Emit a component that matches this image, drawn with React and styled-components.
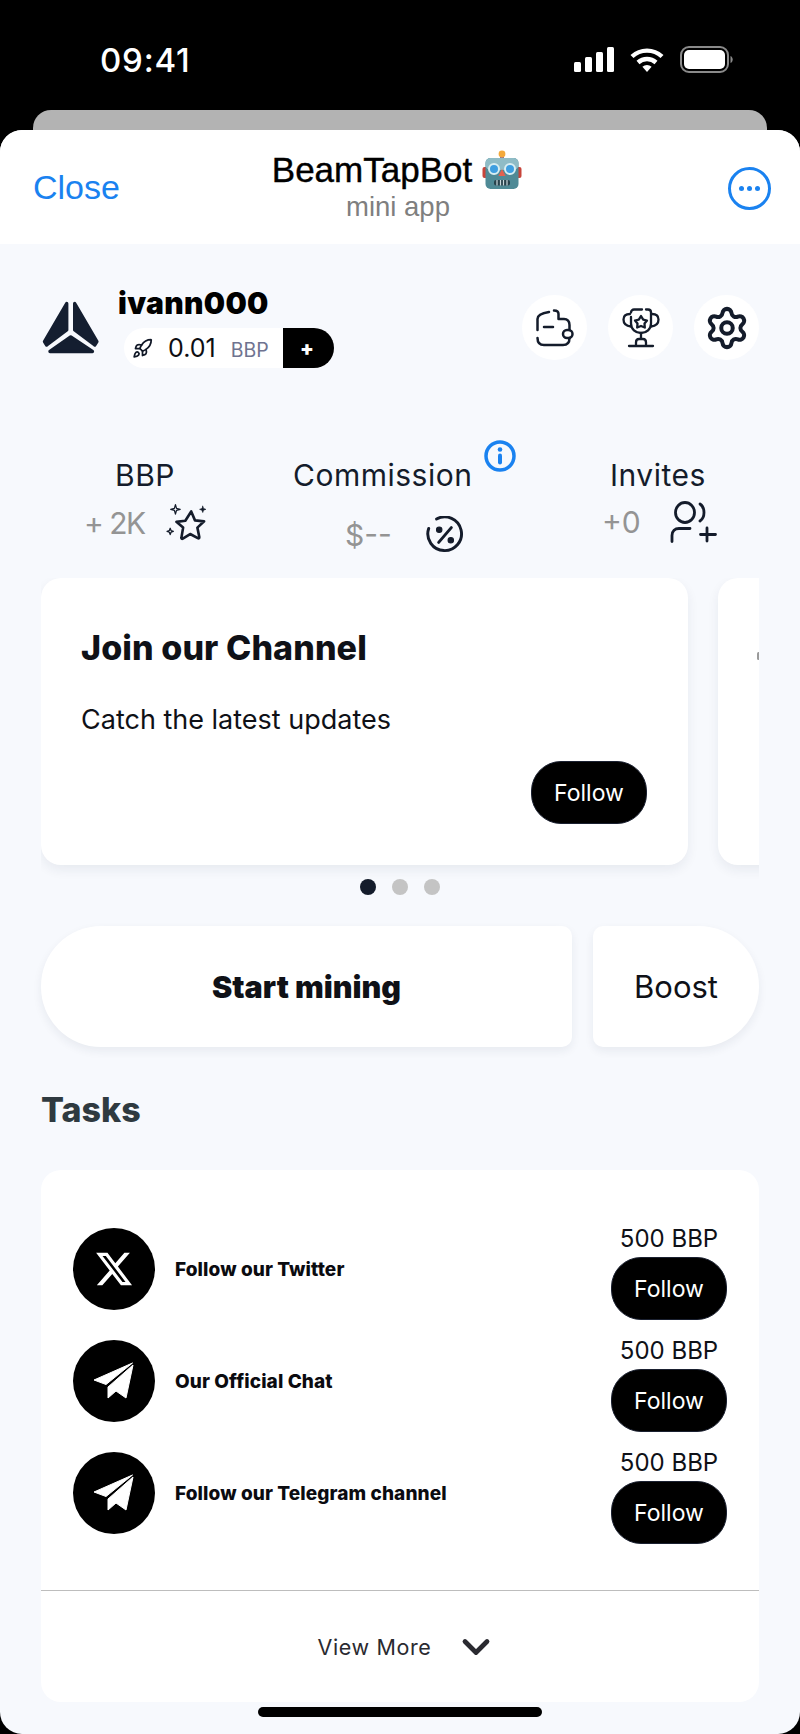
import React from 'react';
import styled, { createGlobalStyle } from 'styled-components';
import { FaXTwitter } from 'react-icons/fa6';
import { ChevronDown, Rocket, Settings } from 'lucide-react';

const GlobalStyle = createGlobalStyle`
  html, body { margin: 0; padding: 0; background: #000; }
  * { box-sizing: border-box; }
  body { font-family: Inter, "Noto Sans", sans-serif; }
  svg { flex: none; }
`;

const Phone = styled.div`
  width: 800px;
  height: 1734px;
  background: #000;
  overflow: hidden;
`;
const StatusBar = styled.div`
  height: 110px;
  padding: 43px 67px 0 100px;
  display: flex;
  justify-content: space-between;
  align-items: flex-start;
`;
const Time = styled.div`
  color: #fff;
  font-family: Inter, sans-serif;
  font-size: 33px;
  font-weight: 500;
  line-height: 34px;
  letter-spacing: 0.8px;
`;
const StatusIcons = styled.div`
  display: flex;
  align-items: center;
  gap: 16px;
  padding-top: 3px;
`;
const PeekSheet = styled.div`
  height: 40px;
  margin: 0 33px -20px;
  background: #b3b3b3;
  border-radius: 18px 18px 0 0;
`;
const Sheet = styled.div`
  position: relative;
  height: 1604px;
  background: #f7f9fd;
  border-radius: 22px;
  overflow: hidden;
`;
const TopBar = styled.div`
  height: 114px;
  background: #fff;
  display: grid;
  grid-template-columns: 1fr auto 1fr;
  align-items: center;
  padding: 0 37px 0 33px;
`;
const Close = styled.div`
  color: #1a82f0;
  font-family: "Liberation Sans", sans-serif;
  font-size: 34px;
`;
const TitleBlock = styled.div`
  text-align: center;
  margin-top: -4px;
`;
const Title = styled.div`
  display: flex;
  align-items: center;
  gap: 10px;
  color: #000;
  font-family: "Liberation Sans", sans-serif;
  font-size: 35px;
  line-height: 40px;
  margin-top: -1px;
  margin-left: -2px;
  -webkit-text-stroke: 0.4px #000;
`;
const Subtitle = styled.div`
  color: #7f7f7f;
  font-family: "Liberation Sans", sans-serif;
  font-size: 27.5px;
  line-height: 26px;
  margin-top: 4px;
`;
const MoreButton = styled.div`
  justify-self: end;
  width: 43px;
  height: 43px;
  margin: 3px -8px 0 0;
  border: 3px solid #1a82f0;
  border-radius: 50%;
  display: flex;
  align-items: center;
  justify-content: center;
  gap: 3px;
`;
const MoreDot = styled.span`
  width: 5px;
  height: 5px;
  border-radius: 50%;
  background: #1a82f0;
`;
const Content = styled.div`
  padding: 46px 41px 0;
`;
const Profile = styled.div`
  height: 78px;
  display: flex;
  align-items: flex-start;
`;
const Logo = styled.svg`
  width: 60px;
  height: 55px;
  margin-top: 10px;
`;
const Identity = styled.div`
  margin-left: 17px;
`;
const UserName = styled.div`
  color: #000;
  font-size: 30px;
  font-weight: 900;
  line-height: 28px;
  letter-spacing: 0.3px;
  margin-top: -1px;
`;
const Balance = styled.div`
  display: flex;
  height: 40px;
  margin: 11px 0 0 6px;
`;
const BalancePill = styled.div`
  width: 159px;
  background: #fff;
  border-radius: 20px 0 0 20px;
  display: flex;
  align-items: center;
  padding-left: 8px;
  color: #111827;
`;
const BalanceValue = styled.span`
  margin-left: 15px;
  color: #0e0e12;
  font-size: 25px;
  line-height: 30px;
`;
const BalanceUnit = styled.span`
  margin-left: 15px;
  margin-top: 4px;
  color: #6f7390;
  font-size: 19.5px;
  line-height: 26px;
`;
const PlusButton = styled.div`
  width: 51px;
  background: #000;
  border-radius: 0 20px 20px 0;
  color: #fff;
  display: flex;
  align-items: center;
  justify-content: center;
  padding-right: 3px;
  font-size: 20px;
  font-weight: 900;
`;
const ProfileActions = styled.div`
  margin-left: auto;
  margin-top: 5px;
  display: flex;
  gap: 21px;
`;
const RoundAction = styled.div`
  width: 65px;
  height: 65px;
  background: #fff;
  border-radius: 50%;
  display: flex;
  align-items: center;
  justify-content: center;
  color: #141c2b;
`;
const Stats = styled.div`
  height: 121px;
  margin-top: 89px;
  padding-left: 43px;
  display: flex;
  align-items: flex-start;
`;
const Stat = styled.div`
  position: relative;
  flex: none;
  width: ${(p) => p.$width}px;
  margin-right: ${(p) => p.$gap || 0}px;
`;
const StatLabel = styled.div`
  color: #141c2b;
  font-size: 30px;
  line-height: 36px;
  letter-spacing: 0.5px;
  white-space: nowrap;
  padding-left: ${(p) => p.$inset || 0}px;
`;
const StatValue = styled.div`
  display: flex;
  height: 40px;
  margin-top: ${(p) => p.$top}px;
  align-items: center;
  gap: ${(p) => p.$gap}px;
  padding-left: ${(p) => p.$inset || 0}px;
`;
const StatNumber = styled.span`
  color: #949494;
  font-size: 30px;
  line-height: 40px;
  letter-spacing: ${(p) => p.$tight || 0}px;
  white-space: nowrap;
`;
const InfoBadge = styled.svg`
  position: absolute;
  right: 0;
  top: -17px;
  width: 32px;
  height: 32px;
`;
const Carousel = styled.div`
  display: flex;
  gap: 30px;
  overflow: hidden;
  padding-bottom: 14px;
`;
const PromoCard = styled.div`
  flex: none;
  width: 647px;
  height: 287px;
  padding: 50px 41px 0 40px;
  background: #fff;
  border-radius: 20px;
  box-shadow: 0 5px 12px rgba(30, 40, 70, 0.07);
`;
const PromoTitle = styled.div`
  color: #0f1117;
  font-size: 34px;
  font-weight: 800;
  line-height: 40px;
  letter-spacing: 0.1px;
`;
const PromoText = styled.div`
  margin-top: 35px;
  color: #0f1117;
  font-size: 27px;
  line-height: 34px;
`;
const PromoFooter = styled.div`
  display: flex;
  justify-content: flex-end;
  margin-top: 24px;
`;
const FollowButton = styled.div`
  width: 116px;
  height: 63px;
  background: #000;
  border: 1px solid #1a2030;
  border-radius: 30px;
  color: #fff;
  font-size: 23px;
  display: flex;
  align-items: center;
  justify-content: center;
`;
const NextCard = styled.div`
  flex: none;
  width: 647px;
  height: 287px;
  padding: 74px 0 0 39px;
  background: #fff;
  border-radius: 20px;
  box-shadow: 0 5px 12px rgba(30, 40, 70, 0.07);
`;
const CutMark = styled.div`
  width: 3px;
  height: 8px;
  border-radius: 2px;
  background: #9a9a9a;
`;
const Dots = styled.div`
  display: flex;
  justify-content: flex-start;
  gap: 16px;
  padding-left: 319px;
`;
const Dot = styled.span`
  width: 16px;
  height: 16px;
  border-radius: 50%;
  background: ${(p) => (p.$active ? '#141c2b' : '#c4c4c4')};
`;
const Actions = styled.div`
  display: flex;
  gap: 21px;
  margin-top: 31px;
`;
const ActionButton = styled.div`
  height: 121px;
  flex: ${(p) => (p.$main ? '0 0 531px' : '1')};
  background: #fff;
  border-radius: ${(p) => (p.$main ? '60px 10px 10px 60px' : '10px 60px 60px 10px')};
  box-shadow: 0 4px 10px rgba(30, 40, 70, 0.07);
  color: #0f1117;
  font-size: ${(p) => (p.$main ? 30.5 : 31)}px;
  font-weight: ${(p) => (p.$main ? 900 : 400)};
  display: flex;
  align-items: center;
  justify-content: center;
`;
const SectionTitle = styled.div`
  margin-top: 43px;
  color: #2f3a40;
  font-size: 34px;
  font-weight: 800;
  line-height: 40px;
`;
const TaskCard = styled.div`
  margin-top: 40px;
  height: 532px;
  background: #fff;
  border-radius: 20px;
  overflow: hidden;
`;
const TaskList = styled.div`
  height: 421px;
  padding: 55px 32px 0;
  border-bottom: 1px solid #bdbdbd;
  display: flex;
  flex-direction: column;
  gap: 17px;
`;
const TaskRow = styled.div`
  height: 95px;
  display: flex;
  justify-content: space-between;
`;
const TaskInfo = styled.div`
  height: 82px;
  margin-top: 3px;
  display: flex;
  align-items: center;
  gap: 20px;
`;
const TaskIcon = styled.div`
  width: 82px;
  height: 82px;
  background: #000;
  border-radius: 50%;
  color: #fff;
  display: flex;
  align-items: center;
  justify-content: center;
`;
const TaskName = styled.div`
  color: #0b0b10;
  font-size: 19px;
  font-weight: 800;
  letter-spacing: 0.1px;
`;
const TaskReward = styled.div`
  display: flex;
  flex-direction: column;
  align-items: center;
`;
const RewardText = styled.div`
  color: #0f1117;
  font-size: 24px;
  line-height: 32px;
  margin-top: -2px;
  margin-bottom: 2px;
`;
const ViewMore = styled.div`
  height: 110px;
  display: flex;
  align-items: center;
  justify-content: center;
  gap: 23px;
  color: #2a2a30;
  padding: 2px 0 0 16px;
`;
const ViewMoreText = styled.span`
  font-size: 21.5px;
  letter-spacing: 0.6px;
`;
const HomeIndicator = styled.div`
  width: 284px;
  height: 10px;
  margin: 5px auto 0;
  background: #000;
  border-radius: 5px;
`;

const Signal = () => (
  <svg width="40" height="25" viewBox="0 0 40 25" fill="#fff">
    <rect x="0" y="15" width="7" height="10" rx="1.5" />
    <rect x="11" y="10" width="7" height="15" rx="1.5" />
    <rect x="22" y="5" width="7" height="20" rx="1.5" />
    <rect x="33" y="0" width="7" height="25" rx="1.5" />
  </svg>
);

const Wifi = () => (
  <svg width="34" height="26" viewBox="0 0 34 26" fill="none" stroke="#fff" strokeWidth="4.4">
    <path d="M2 9.500a22 22 0 0 1 30 0" />
    <path d="M8 15.500a13.500 13.500 0 0 1 18 0" />
    <path d="M17 25l-4.600-5.200a7 7 0 0 1 9.200 0z" fill="#fff" stroke="none" />
  </svg>
);

const Battery = () => (
  <svg width="53" height="27" viewBox="0 0 53 27" fill="none">
    <rect x="1" y="1" width="47" height="25" rx="8" stroke="#8a8a8a" strokeWidth="2" />
    <rect x="4" y="4" width="41" height="19" rx="5" fill="#fff" />
    <path d="M50.500 10v7c1.400-.5 2.200-2 2.200-3.500s-.8-3-2.200-3.500z" fill="#8a8a8a" />
  </svg>
);

const RobotEmoji = () => (
  <svg width="40" height="40" viewBox="0 0 40 40">
    <rect x="18" y="5" width="4" height="5" fill="#8a6a9a" />
    <circle cx="20" cy="4" r="3.400" fill="#f3a93c" />
    <rect x="0.500" y="17" width="5" height="11" rx="2" fill="#c8443a" />
    <rect x="34.500" y="17" width="5" height="11" rx="2" fill="#c8443a" />
    <rect x="3.500" y="8" width="33" height="31" rx="5" fill="#4f8a96" />
    <rect x="3.500" y="8" width="33" height="12" rx="5" fill="#8fbcc6" />
    <circle cx="12" cy="19" r="5" fill="#3f9fe0" stroke="#d8eef2" strokeWidth="2" />
    <circle cx="28" cy="19" r="5" fill="#3f9fe0" stroke="#d8eef2" strokeWidth="2" />
    <path d="M20 19l3.600 7h-7.200z" fill="#e2604e" />
    <rect x="12" y="30" width="16" height="5.500" rx="2" fill="#28424c" />
    <path d="M15 30v5.500M18.500 30v5.500M21.500 30v5.500M25 30v5.500" stroke="#c9d8dc" strokeWidth="1.200" />
  </svg>
);

const BrandMark = () => (
  <Logo viewBox="0 0 60 55" fill="#141e30" stroke="#141e30" strokeWidth="3.400" strokeLinejoin="round">
    <path d="M25.700 3.500L3.500 41.500l2.200 3.500L25.700 30z" />
    <path d="M33.700 3.500l22.200 38-2.200 3.500L33.700 30z" />
    <path d="M9 51.500L29.700 37l21.700 14.500z" />
  </Logo>
);

const WalletIcon = () => (
  <svg width="38" height="38" viewBox="0 0 38 38" fill="none" stroke="#141c2b" strokeWidth="2.500" strokeLinecap="round" strokeLinejoin="round">
    <path d="M1.500 21V10c0-3.500 4-6 11.500-7" />
    <path d="M18 1.500c3 0 4.500 1.500 4.500 3.500v5H28c3.500 0 5.500 2.500 5.500 6v5" />
    <path d="M8 18h9" />
    <path d="M1.500 29c0 4.500 2.500 7 6.500 7h19c4 0 6.500-2.500 6.500-7" />
    <rect x="27" y="21" width="9.500" height="8" rx="4" />
  </svg>
);

const TrophyIcon = () => (
  <svg width="38" height="40" viewBox="0 0 38 40" fill="none" stroke="#141c2b" strokeWidth="2.300" strokeLinecap="round" strokeLinejoin="round">
    <path d="M9 4.500C9 2.500 10.500 1.500 12 1.500h8" />
    <path d="M24 1.500h2c2 0 3 1.500 3 3v11c0 5.500-4.500 9.500-10 9.500S9 21 9 15.500V9" />
    <path d="M8 6C4 6 1.500 8 1.500 11.500S4 18 9 18.500" />
    <path d="M30 6c4 0 6.500 2 6.500 5.500S34 18 29 18.500" />
    <path d="M19 8l2.200 3.600 3.800.9-2.500 3 .3 4-3.800-1.500-3.800 1.500.3-4-2.500-3 3.800-.9z" />
    <path d="M19 25v6M14 37v-2.500c0-2 1-3.500 3-3.500h4c2 0 3 1.500 3 3.500V37M7 38h24" />
  </svg>
);

const StarIcon = () => (
  <svg width="42" height="40" viewBox="0 0 40 38" fill="none" stroke="#141c2b" strokeWidth="2.500" strokeLinejoin="round" strokeLinecap="round">
    <path d="M24 8l3.600 8.500 8.700.9-6.400 6 1.800 9c.2 1-.5 1.500-1.400 1l-7.300-3.900-7 4.400c-.8.400-1.500 0-1.300-1l1.600-9.500-6.400-5.500 8.500-1.100z" />
    <path d="M9 1.500l1 3.500 3.500 1-3.500 1-1 3.500-1-3.500-3.500-1 3.500-1z" strokeWidth="1.200" />
    <path d="M35 3l.8 2.200L38 6l-2.200.8L35 9l-.8-2.200L32 6l2.200-.8z" fill="#141c2b" strokeWidth="0.600" />
    <path d="M4 24l.8 2.200 2.200.8-2.200.8L4 30l-.8-2.200L1 27l2.200-.8z" strokeWidth="1.200" />
  </svg>
);

const PercentIcon = () => (
  <svg width="40" height="38" viewBox="0 0 38 36" fill="none" stroke="#141c2b" strokeWidth="2.800" strokeLinecap="round">
    <path d="M11 2.800a16 16 0 1 1-7.500 9" />
    <path d="M25 11L13 25" />
    <circle cx="13.500" cy="13" r="2.600" fill="#141c2b" strokeWidth="1" />
    <circle cx="24.500" cy="23" r="2.600" fill="#141c2b" strokeWidth="1" />
  </svg>
);

const InviteIcon = () => (
  <svg width="48" height="42" viewBox="0 0 48 42" fill="none" stroke="#141c2b" strokeWidth="2.800" strokeLinecap="round">
    <ellipse cx="15" cy="11.500" rx="9.500" ry="10" />
    <path d="M30 3c3 2 4 5.500 4 8.500s-1 6.500-4 8.500" />
    <path d="M2 40.500v-6c0-4.500 3-7 7-7h11" />
    <path d="M37 27v13M30.500 33.500h15" />
  </svg>
);

const PlaneIcon = () => (
  <svg width="42" height="38" viewBox="0 0 42 38" fill="#fff" stroke="#fff" strokeWidth="1" strokeLinejoin="round">
    <path d="M1 18L39.500 1 13 22.500z" />
    <path d="M15 25L40 3l-7 33-10-7-8 7z" />
  </svg>
);

const tasks = [
  { name: 'Follow our Twitter', icon: <FaXTwitter size={40} /> },
  { name: 'Our Official Chat', icon: <PlaneIcon /> },
  { name: 'Follow our Telegram channel', icon: <PlaneIcon /> },
];

export default function App() {
  return (
    <Phone>
      <GlobalStyle />
      <StatusBar>
        <Time>09:41</Time>
        <StatusIcons>
          <Signal />
          <Wifi />
          <Battery />
        </StatusIcons>
      </StatusBar>
      <PeekSheet />
      <Sheet>
        <TopBar>
          <Close>Close</Close>
          <TitleBlock>
            <Title>
              BeamTapBot
              <RobotEmoji />
            </Title>
            <Subtitle>mini app</Subtitle>
          </TitleBlock>
          <MoreButton>
            <MoreDot />
            <MoreDot />
            <MoreDot />
          </MoreButton>
        </TopBar>
        <Content>
          <Profile>
            <BrandMark />
            <Identity>
              <UserName>ivann000</UserName>
              <Balance>
                <BalancePill>
                  <Rocket size={21} strokeWidth={2} />
                  <BalanceValue>0.01</BalanceValue>
                  <BalanceUnit>BBP</BalanceUnit>
                </BalancePill>
                <PlusButton>+</PlusButton>
              </Balance>
            </Identity>
            <ProfileActions>
              <RoundAction>
                <WalletIcon />
              </RoundAction>
              <RoundAction>
                <TrophyIcon />
              </RoundAction>
              <RoundAction>
                <Settings size={46} strokeWidth={2.100} />
              </RoundAction>
            </ProfileActions>
          </Profile>
          <Stats>
            <Stat $width={119} $gap={90}>
              <StatLabel $inset={31}>BBP</StatLabel>
              <StatValue $top={10} $gap={21}>
                <StatNumber $tight={-1.5}>+ 2K</StatNumber>
                <StarIcon />
              </StatValue>
            </Stat>
            <Stat $width={223} $gap={86}>
              <StatLabel>Commission</StatLabel>
              <InfoBadge viewBox="0 0 32 32" fill="none">
                <circle cx="16" cy="16" r="14" stroke="#1a82f0" strokeWidth="3.500" />
                <circle cx="16" cy="9.500" r="2.300" fill="#1a82f0" />
                <rect x="14" y="13.500" width="4" height="11" rx="2" fill="#1a82f0" />
              </InfoBadge>
              <StatValue $top={22} $gap={33} $inset={52}>
                <StatNumber>$--</StatNumber>
                <PercentIcon />
              </StatValue>
            </Stat>
            <Stat $width={114}>
              <StatLabel $inset={8}>Invites</StatLabel>
              <StatValue $top={9} $gap={29}>
                <StatNumber>+0</StatNumber>
                <InviteIcon />
              </StatValue>
            </Stat>
          </Stats>
          <Carousel>
            <PromoCard>
              <PromoTitle>Join our Channel</PromoTitle>
              <PromoText>Catch the latest updates</PromoText>
              <PromoFooter>
                <FollowButton>Follow</FollowButton>
              </PromoFooter>
            </PromoCard>
            <NextCard>
              <CutMark />
            </NextCard>
          </Carousel>
          <Dots>
            <Dot $active />
            <Dot />
            <Dot />
          </Dots>
          <Actions>
            <ActionButton $main>Start mining</ActionButton>
            <ActionButton>Boost</ActionButton>
          </Actions>
          <SectionTitle>Tasks</SectionTitle>
          <TaskCard>
            <TaskList>
              {tasks.map((task) => (
                <TaskRow key={task.name}>
                  <TaskInfo>
                    <TaskIcon>{task.icon}</TaskIcon>
                    <TaskName>{task.name}</TaskName>
                  </TaskInfo>
                  <TaskReward>
                    <RewardText>500 BBP</RewardText>
                    <FollowButton>Follow</FollowButton>
                  </TaskReward>
                </TaskRow>
              ))}
            </TaskList>
            <ViewMore>
              <ViewMoreText>View More</ViewMoreText>
              <ChevronDown size={44} strokeWidth={2.600} />
            </ViewMore>
          </TaskCard>
          <HomeIndicator />
        </Content>
      </Sheet>
    </Phone>
  );
}
